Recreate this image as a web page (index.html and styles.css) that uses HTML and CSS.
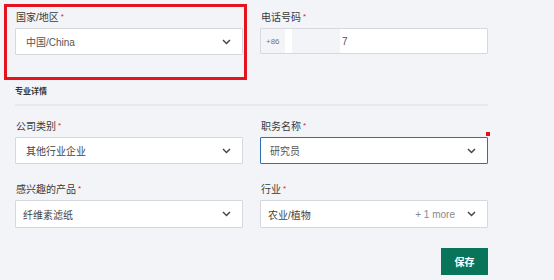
FILE: index.html
```html
<!DOCTYPE html>
<html lang="zh">
<head>
<meta charset="utf-8">
<title>Profile form</title>
<link rel="stylesheet" href="styles.css">
</head>
<body>
<div class="form">
  <div class="highlight"></div>
  <div class="grid">
    <div class="field">
      <div class="label">国家/地区<span class="req">*</span></div>
      <div class="select">
        <span class="value">中国/China</span>
        <svg class="chev" width="9" height="6" viewBox="0 0 9 6"><polyline points="1,1 4.5,4.6 8,1" fill="none" stroke="#444" stroke-width="1.4"/></svg>
      </div>
    </div>
    <div class="field">
      <div class="label">电话号码<span class="req">*</span></div>
      <div class="phone">
        <span class="prefix">+86</span>
        <span class="redact"></span>
        <span class="num">7</span>
      </div>
    </div>
  </div>

  <div class="section">
    <div class="section-title">专业详情</div>
    <div class="divider"></div>
  </div>

  <div class="grid rows">
    <div class="field">
      <div class="label">公司类别<span class="req">*</span></div>
      <div class="select">
        <span class="value dark">其他行业企业</span>
        <svg class="chev" width="9" height="6" viewBox="0 0 9 6"><polyline points="1,1 4.5,4.6 8,1" fill="none" stroke="#444" stroke-width="1.4"/></svg>
      </div>
    </div>
    <div class="field">
      <div class="label">职务名称<span class="req">*</span></div>
      <div class="select focus">
        <span class="marker"></span>
        <span class="value">研究员</span>
        <svg class="chev" width="9" height="6" viewBox="0 0 9 6"><polyline points="1,1 4.5,4.6 8,1" fill="none" stroke="#444" stroke-width="1.4"/></svg>
      </div>
    </div>
    <div class="field">
      <div class="label">感兴趣的产品<span class="req">*</span></div>
      <div class="select tall multi">
        <span class="value dark">纤维素滤纸</span>
        <svg class="chev" width="9" height="6" viewBox="0 0 9 6"><polyline points="1,1 4.5,4.6 8,1" fill="none" stroke="#444" stroke-width="1.4"/></svg>
      </div>
    </div>
    <div class="field">
      <div class="label">行业<span class="req">*</span></div>
      <div class="select tall multi">
        <span class="value dark">农业/植物</span>
        <span class="more">+ 1 more</span>
        <svg class="chev" width="9" height="6" viewBox="0 0 9 6"><polyline points="1,1 4.5,4.6 8,1" fill="none" stroke="#444" stroke-width="1.4"/></svg>
      </div>
    </div>
  </div>

  <div class="actions">
    <button class="save">保存</button>
  </div>
</div>
</body>
</html>
```

FILE: styles.css
```css
* { box-sizing: border-box; }
html, body {
  margin: 0;
  padding: 0;
  background: #f3f4f8;
  font-family: "Liberation Sans", "Noto Sans CJK SC", sans-serif;
  color: #333;
}
.form {
  position: relative;
  width: 554px;
  height: 280px;
  padding: 10px 0 0 15px;
}
.highlight {
  position: absolute;
  left: 4px;
  top: 4px;
  width: 243px;
  height: 76px;
  border: 3px solid #e5131d;
  pointer-events: none;
}
.grid {
  display: grid;
  grid-template-columns: 228px 228px;
  column-gap: 17px;
  width: 473px;
}
.grid.rows { row-gap: 18px; margin-top: 13px; }
.label {
  font-size: 10px;
  line-height: 14px;
  height: 14px;
  margin-bottom: 4px;
  color: #3a3a3a;
  padding-left: 1px;
}
.req {
  color: #d8232f;
  font-size: 8px;
  margin-left: 2px;
  vertical-align: 2px;
}
.select {
  position: relative;
  height: 27px;
  background: #fff;
  border: 1px solid #d6d8dd;
  border-radius: 1px;
  display: flex;
  align-items: center;
  padding: 0 10px 0 10px;
  font-size: 10px;
  color: #555;
}
.select.tall { height: 28px; }
.select.multi { padding-left: 7px; }
.select.focus { border: 1.5px solid #2f6fba; padding-left: 9px; }
.value { flex: 1; white-space: nowrap; }
.value.dark { color: #444; }
.more {
  color: #8a8a8a;
  font-size: 10px;
  margin-right: 12px;
}
.chev { flex: none; margin-right: 1px; }
.marker {
  position: absolute;
  right: -3px;
  top: -6px;
  width: 4px;
  height: 4px;
  background: #e4111c;
}
.phone {
  height: 26px;
  background: #fff;
  border: 1px solid #d6d8dd;
  border-radius: 1px;
  display: flex;
  align-items: stretch;
  font-size: 10px;
}
.prefix {
  width: 24px;
  background: #f3f4f7;
  font-size: 8px;
  color: #777;
  display: flex;
  align-items: center;
  padding-left: 5px;
}
.redact {
  width: 48px;
  margin-left: 7px;
  background: #f3f4f7;
}
.num {
  display: flex;
  align-items: center;
  padding-left: 2px;
  color: #555;
}
.section { margin-top: 32px; width: 473px; }
.section-title {
  font-size: 8px;
  line-height: 10px;
  font-weight: bold;
  color: #333;
  margin-bottom: 7px;
}
.divider { height: 2px; background: #e8e9ee; }
.actions {
  width: 473px;
  display: flex;
  justify-content: flex-end;
  margin-top: 20px;
}
.save {
  width: 47px;
  height: 27px;
  border: none;
  border-radius: 0;
  background: #087459;
  color: #fff;
  font-family: "Liberation Sans", "Noto Sans CJK SC", sans-serif;
  font-size: 10px;
  font-weight: bold;
  padding: 0;
}
```
